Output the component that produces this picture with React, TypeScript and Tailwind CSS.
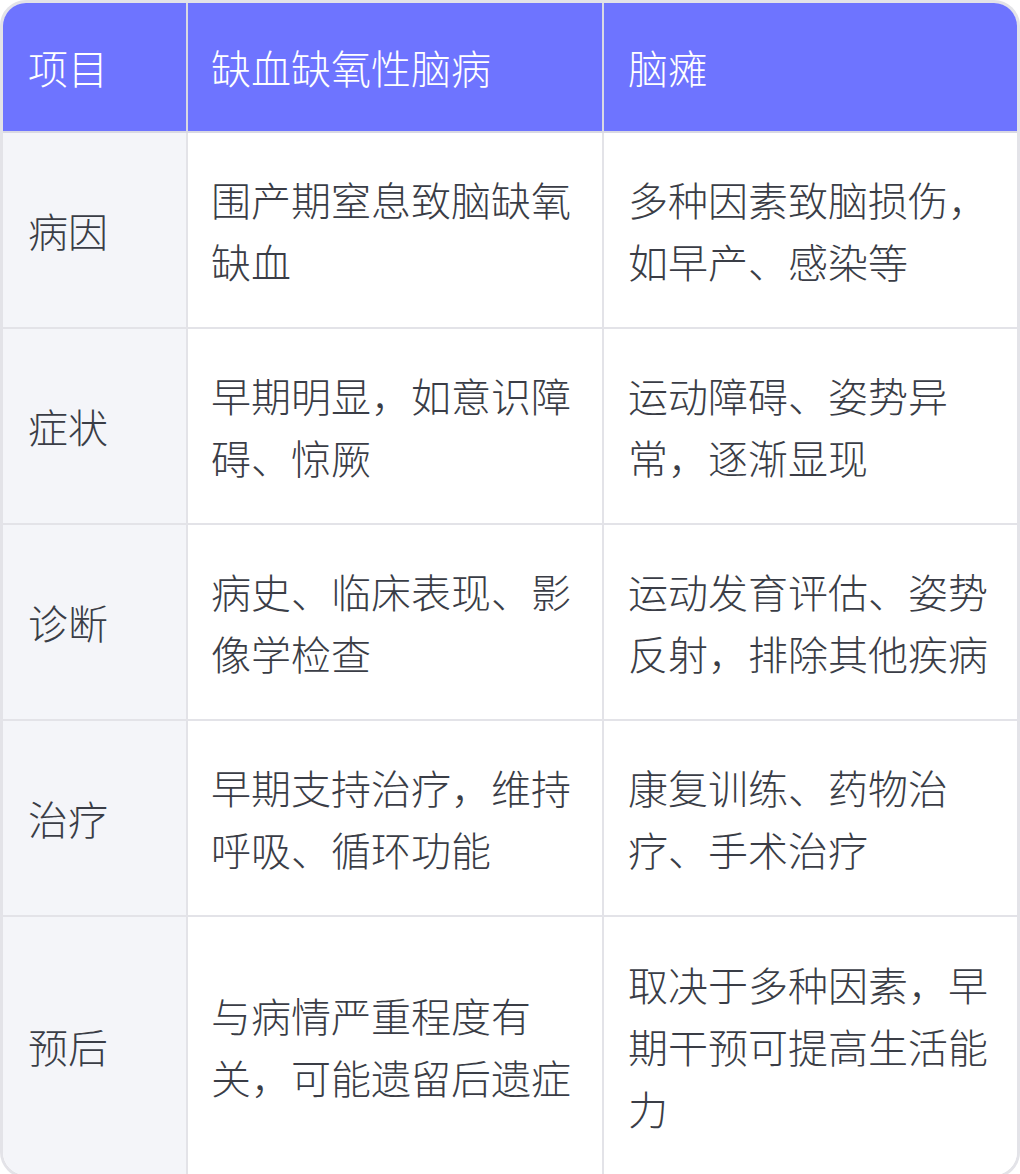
import React from "react";

const rows = [
  {
    label: "病因",
    hie: "围产期窒息致脑缺氧缺血",
    cp: "多种因素致脑损伤，如早产、感染等",
  },
  {
    label: "症状",
    hie: "早期明显，如意识障碍、惊厥",
    cp: "运动障碍、姿势异常，逐渐显现",
  },
  {
    label: "诊断",
    hie: "病史、临床表现、影像学检查",
    cp: "运动发育评估、姿势反射，排除其他疾病",
  },
  {
    label: "治疗",
    hie: "早期支持治疗，维持呼吸、循环功能",
    cp: "康复训练、药物治疗、手术治疗",
  },
  {
    label: "预后",
    hie: "与病情严重程度有关，可能遗留后遗症",
    cp: "取决于多种因素，早期干预可提高生活能力",
  },
];

export default function App() {
  return (
    <div
      className="w-[1020px] h-[1174px] bg-white"
      style={{ fontFamily: '"Noto Sans CJK SC", "Noto Sans", sans-serif' }}
    >
      <div className="grid grid-cols-[185px_416px_1fr] border-[3px] border-[#e3e3e8] rounded-[26px] overflow-hidden text-[40px] leading-[62px] font-light text-[#3a3d46]">
        {/* Header */}
        <div className="bg-[#6e74ff] text-white pl-[25px] pr-[20px] py-[33px] border-r-2 border-b-2 border-[#d9d9e3]">
          项目
        </div>
        <div className="bg-[#6e74ff] text-white pl-[23px] pr-[20px] py-[33px] border-r-2 border-b-2 border-[#d9d9e3]">
          缺血缺氧性脑病
        </div>
        <div className="bg-[#6e74ff] text-white pl-[24px] pr-[20px] py-[33px] border-b-2 border-[#d9d9e3]">
          脑瘫
        </div>

        {rows.map((row, i) => {
          const last = i === rows.length - 1;
          return (
            <React.Fragment key={row.label}>
              <div
                className={`bg-[#f4f5f9] pl-[25px] pr-[20px] flex items-center border-r-2 border-[#e3e3e8] ${
                  last ? "py-[36px]" : "py-[35px] border-b-2"
                }`}
              >
                {row.label}
              </div>
              <div
                className={`bg-white pl-[23px] pr-[20px] flex items-center border-r-2 border-[#e3e3e8] ${
                  last ? "py-[36px]" : "py-[35px] border-b-2"
                }`}
              >
                <p>{row.hie}</p>
              </div>
              <div
                className={`bg-white pl-[24px] pr-[20px] flex items-center border-[#e3e3e8] ${
                  last ? "py-[36px]" : "py-[35px] border-b-2"
                }`}
              >
                <p>{row.cp}</p>
              </div>
            </React.Fragment>
          );
        })}
      </div>
    </div>
  );
}
